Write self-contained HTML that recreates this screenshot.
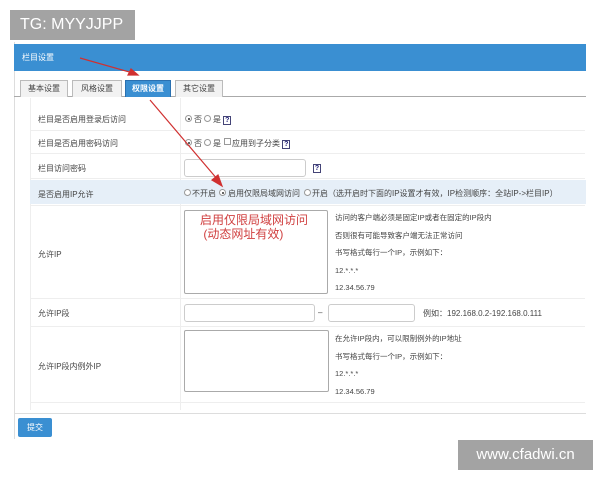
<!DOCTYPE html><html><head><meta charset="utf-8"><style>
*{margin:0;padding:0;box-sizing:border-box}
body{width:600px;height:480px;background:#fff;position:relative;overflow:hidden;font-family:"Liberation Sans","Noto Sans CJK SC",sans-serif;font-size:8px;color:#444}
.a{position:absolute}
.inp{position:absolute;border:1px solid #ccc;border-radius:3px;background:#fff}
.r{position:absolute;width:7px;height:7px;border:1px solid #999;border-radius:50%;background:#fff}
.r.on::after{content:"";position:absolute;left:1.5px;top:1.5px;width:2px;height:2px;border-radius:50%;background:#333}
.q{display:inline-block;width:8px;height:9px;border:1px solid #447;font-size:7px;line-height:7px;text-align:center;color:#227;font-weight:bold}
.tab{position:absolute;top:80px;height:17px;border:1px solid #bbb;border-bottom:none;background:#f2f2f2;font-size:8px;line-height:16px;text-align:center;color:#444}
.hl{position:absolute;left:30px;right:15px;height:1px;background:#eee}
</style></head><body>
<div class="a" style="left:10px;top:10px;width:125px;height:30px;background:#a3a3a3;color:#fff;font-size:16px;line-height:30px;padding-left:10px">TG: MYYJJPP</div>
<div class="a" style="left:14px;top:42px;width:572px;height:397px;background:#fff;border-left:1px solid #ddd"></div>
<div class="a" style="left:14px;top:44px;width:572px;height:27px;background:#3a8fd2;color:#fff;font-size:8px;line-height:27px;padding-left:8px">栏目设置</div>
<div class="a" style="left:14px;top:96px;width:572px;height:1px;background:#aaa"></div>
<div class="tab" style="left:20px;width:48px">基本设置</div>
<div class="tab" style="left:72px;width:50px">风格设置</div>
<div class="tab" style="left:125px;width:46px;background:#3a8fd2;color:#fff;border-color:#2a70b0;font-weight:bold">权限设置</div>
<div class="tab" style="left:175px;width:48px">其它设置</div>
<div class="a" style="left:30px;top:98px;width:1px;height:312px;background:#eee"></div>
<div class="a" style="left:180px;top:98px;width:1px;height:312px;background:#eee"></div>
<div class="a" style="left:30px;top:180px;width:556px;height:24px;background:#e6eff8"></div>
<div class="hl" style="top:130px"></div><div class="hl" style="top:153px"></div><div class="hl" style="top:178px"></div><div class="hl" style="top:205px"></div><div class="hl" style="top:298px"></div><div class="hl" style="top:326px"></div><div class="hl" style="top:402px"></div>
<div class="a" style="left:38px;top:114px">栏目是否启用登录后访问</div>
<div class="r on" style="left:185px;top:115px"></div><div class="a" style="left:194px;top:114px">否</div><div class="r" style="left:204px;top:115px"></div><div class="a" style="left:213px;top:114px">是 <span class="q">?</span></div>
<div class="a" style="left:38px;top:138px">栏目是否启用密码访问</div>
<div class="r on" style="left:185px;top:139px"></div><div class="a" style="left:194px;top:138px">否</div><div class="r" style="left:204px;top:139px"></div><div class="a" style="left:213px;top:138px">是</div><div class="a" style="left:224px;top:138px;width:7px;height:7px;border:1px solid #999"></div><div class="a" style="left:232px;top:138px">应用到子分类 <span class="q">?</span></div>
<div class="a" style="left:38px;top:163px">栏目访问密码</div>
<div class="inp" style="left:184px;top:159px;width:122px;height:18px"></div><div class="a" style="left:313px;top:163px"><span class="q">?</span></div>
<div class="a" style="left:38px;top:189px">是否启用IP允许</div>
<div class="r" style="left:184px;top:189px"></div><div class="a" style="left:192px;top:188px">不开启</div>
<div class="r on" style="left:219px;top:189px"></div><div class="a" style="left:228px;top:188px">启用仅限局域网访问</div>
<div class="r" style="left:304px;top:189px"></div><div class="a" style="left:312px;top:188px">开启（选开启时下面的IP设置才有效，IP检测顺序：全站IP-&gt;栏目IP）</div>
<div class="a" style="left:38px;top:249px">允许IP</div>
<div class="inp" style="left:184px;top:210px;width:144px;height:84px;border-radius:2px;border-color:#aaa"></div>
<div class="a" style="left:200px;top:213px;color:#d04040;font-size:12px;line-height:14px">启用仅限局域网访问<br>&nbsp;(动态网址有效)</div>
<div class="a" style="left:335px;top:209px;line-height:17.5px;font-size:7.5px">访问的客户端必须是固定IP或者在固定的IP段内<br>否则很有可能导致客户端无法正常访问<br>书写格式每行一个IP，示例如下：<br>12.*.*.*<br>12.34.56.79</div>
<div class="a" style="left:38px;top:308px">允许IP段</div>
<div class="inp" style="left:184px;top:304px;width:131px;height:18px"></div><div class="a" style="left:318px;top:308px">–</div>
<div class="inp" style="left:328px;top:304px;width:87px;height:18px"></div>
<div class="a" style="left:423px;top:308px">例如：192.168.0.2-192.168.0.111</div>
<div class="a" style="left:38px;top:361px">允许IP段内例外IP</div>
<div class="inp" style="left:184px;top:330px;width:145px;height:62px;border-radius:2px;border-color:#aaa"></div>
<div class="a" style="left:335px;top:330px;line-height:17.5px;font-size:7.5px">在允许IP段内，可以限制例外的IP地址<br>书写格式每行一个IP，示例如下：<br>12.*.*.*<br>12.34.56.79</div>
<div class="a" style="left:14px;top:413px;width:572px;height:1px;background:#ddd"></div>
<div class="a" style="left:18px;top:418px;width:34px;height:19px;background:#3a8fd2;color:#fff;border-radius:2px;line-height:19px;text-align:center">提交</div>
<div class="a" style="left:458px;top:440px;width:135px;height:30px;background:#a3a3a3;color:#fff;font-size:15px;line-height:30px;text-align:center">www.cfadwi.cn</div>
<svg class="a" style="left:0;top:0" width="600" height="480"><g stroke="#d03030" stroke-width="1.2" fill="#d03030">
<line x1="80" y1="58" x2="133" y2="73"/><polygon points="138,75 128,75 131,69"/>
<line x1="150" y1="100" x2="218" y2="180"/><polygon points="222,186 212,180 218,175"/></g></svg>
</body></html>
